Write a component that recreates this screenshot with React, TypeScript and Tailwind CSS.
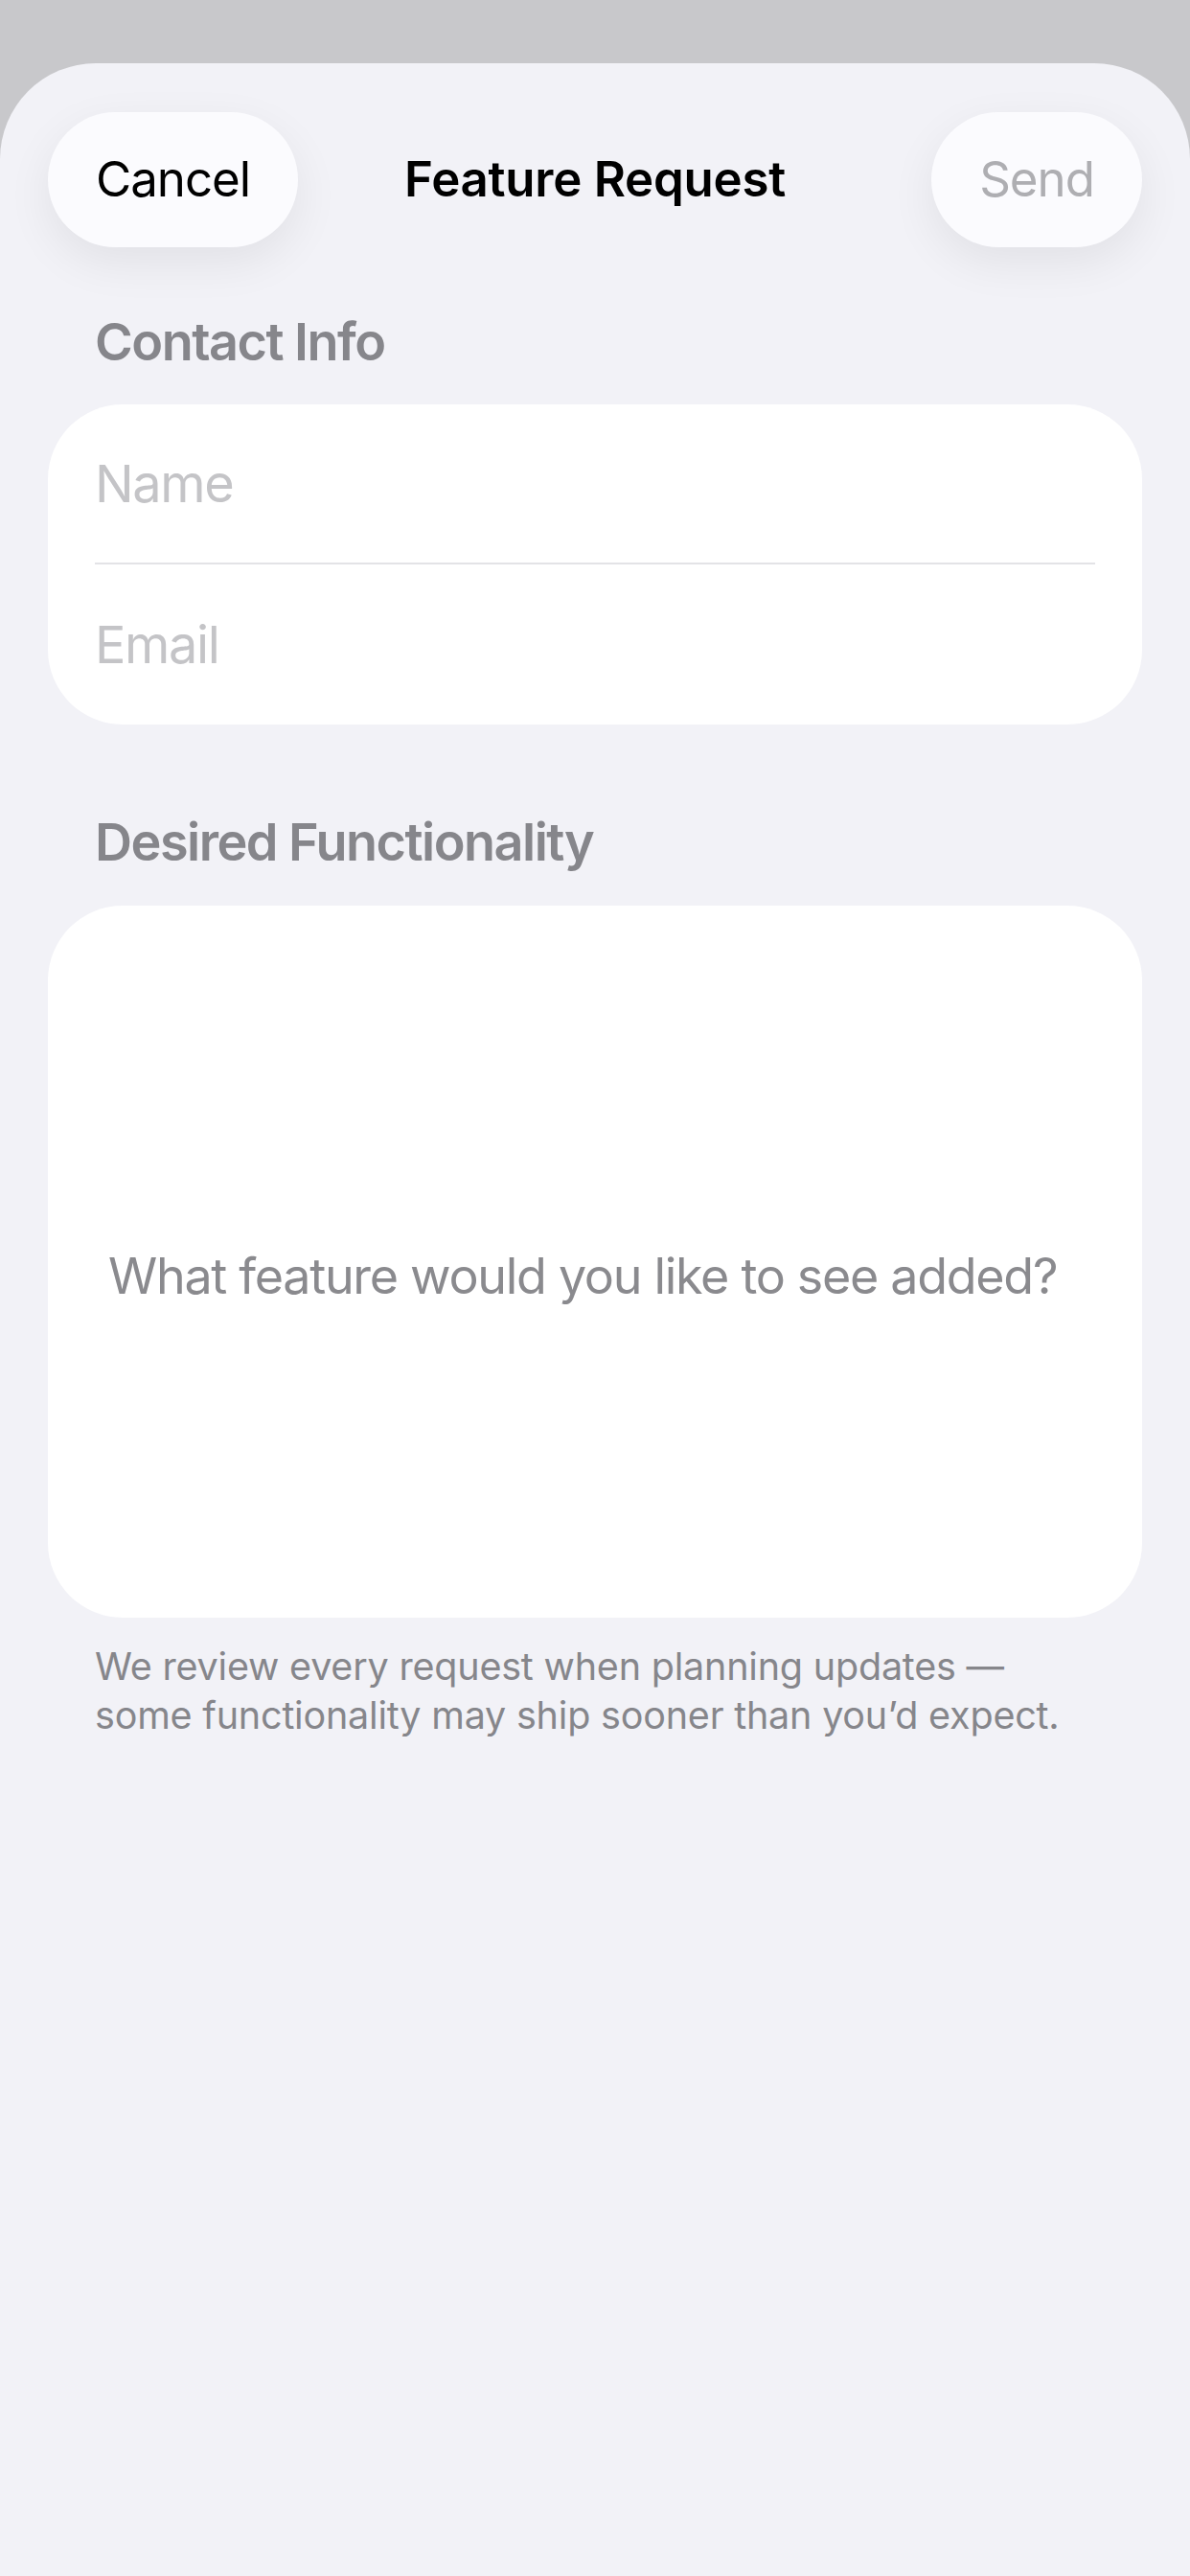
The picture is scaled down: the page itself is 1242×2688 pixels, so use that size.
export default function App() {
  return (
    <div className="min-h-[2688px] bg-[#c8c8cb] pt-[66px] font-['Inter','Liberation_Sans',sans-serif] antialiased">
      <div className="min-h-[2622px] rounded-t-[100px] bg-[#f2f2f7] px-[50px] pt-[51px]">
        {/* nav bar */}
        <div className="grid grid-cols-[1fr_auto_1fr] items-center">
          <button className="h-[141px] w-[261px] justify-self-start rounded-full bg-[#fbfbfe] text-[51px] tracking-[-0.02em] text-black shadow-[0_16px_48px_rgba(0,0,0,0.07)]">
            Cancel
          </button>
          <h1 className="text-[51px] font-semibold tracking-[-0.005em] text-black">Feature Request</h1>
          <button className="h-[141px] w-[220px] justify-self-end rounded-full bg-[#fbfbfe] text-[51px] tracking-[-0.02em] text-[#aeaeb2] shadow-[0_16px_48px_rgba(0,0,0,0.07)]">
            Send
          </button>
        </div>

        {/* contact info */}
        <h2 className="mt-[66px] px-[49px] text-[54px] leading-[66px] font-semibold tracking-[-0.028em] text-[#86868b]">
          Contact Info
        </h2>
        <div className="mt-[32px] rounded-[78px] bg-white px-[49px]">
          <div className="flex h-[167px] items-center border-b-2 border-[#e3e3e6] text-[54px] tracking-[-0.025em] text-[#c4c4c7]">
            Name
          </div>
          <div className="flex h-[167px] items-center text-[54px] tracking-[-0.025em] text-[#c4c4c7]">Email</div>
        </div>

        {/* desired functionality */}
        <h2 className="mt-[90px] px-[49px] text-[54px] leading-[66px] font-semibold tracking-[-0.028em] text-[#86868b]">
          Desired Functionality
        </h2>
        <div className="mt-[33px] flex h-[743px] items-center rounded-[78px] bg-white pt-[30px] pl-[63px]">
          <p className="text-[52px] tracking-[-0.025em] text-[#8a8a8e]">What feature would you like to see added?</p>
        </div>
        <p className="mt-[26px] px-[49px] text-[39.5px] leading-[51px] tracking-[-0.005em] text-[#86868b]">
          We review every request when planning updates —<br />
          some functionality may ship sooner than you’d expect.
        </p>
      </div>
    </div>
  );
}
